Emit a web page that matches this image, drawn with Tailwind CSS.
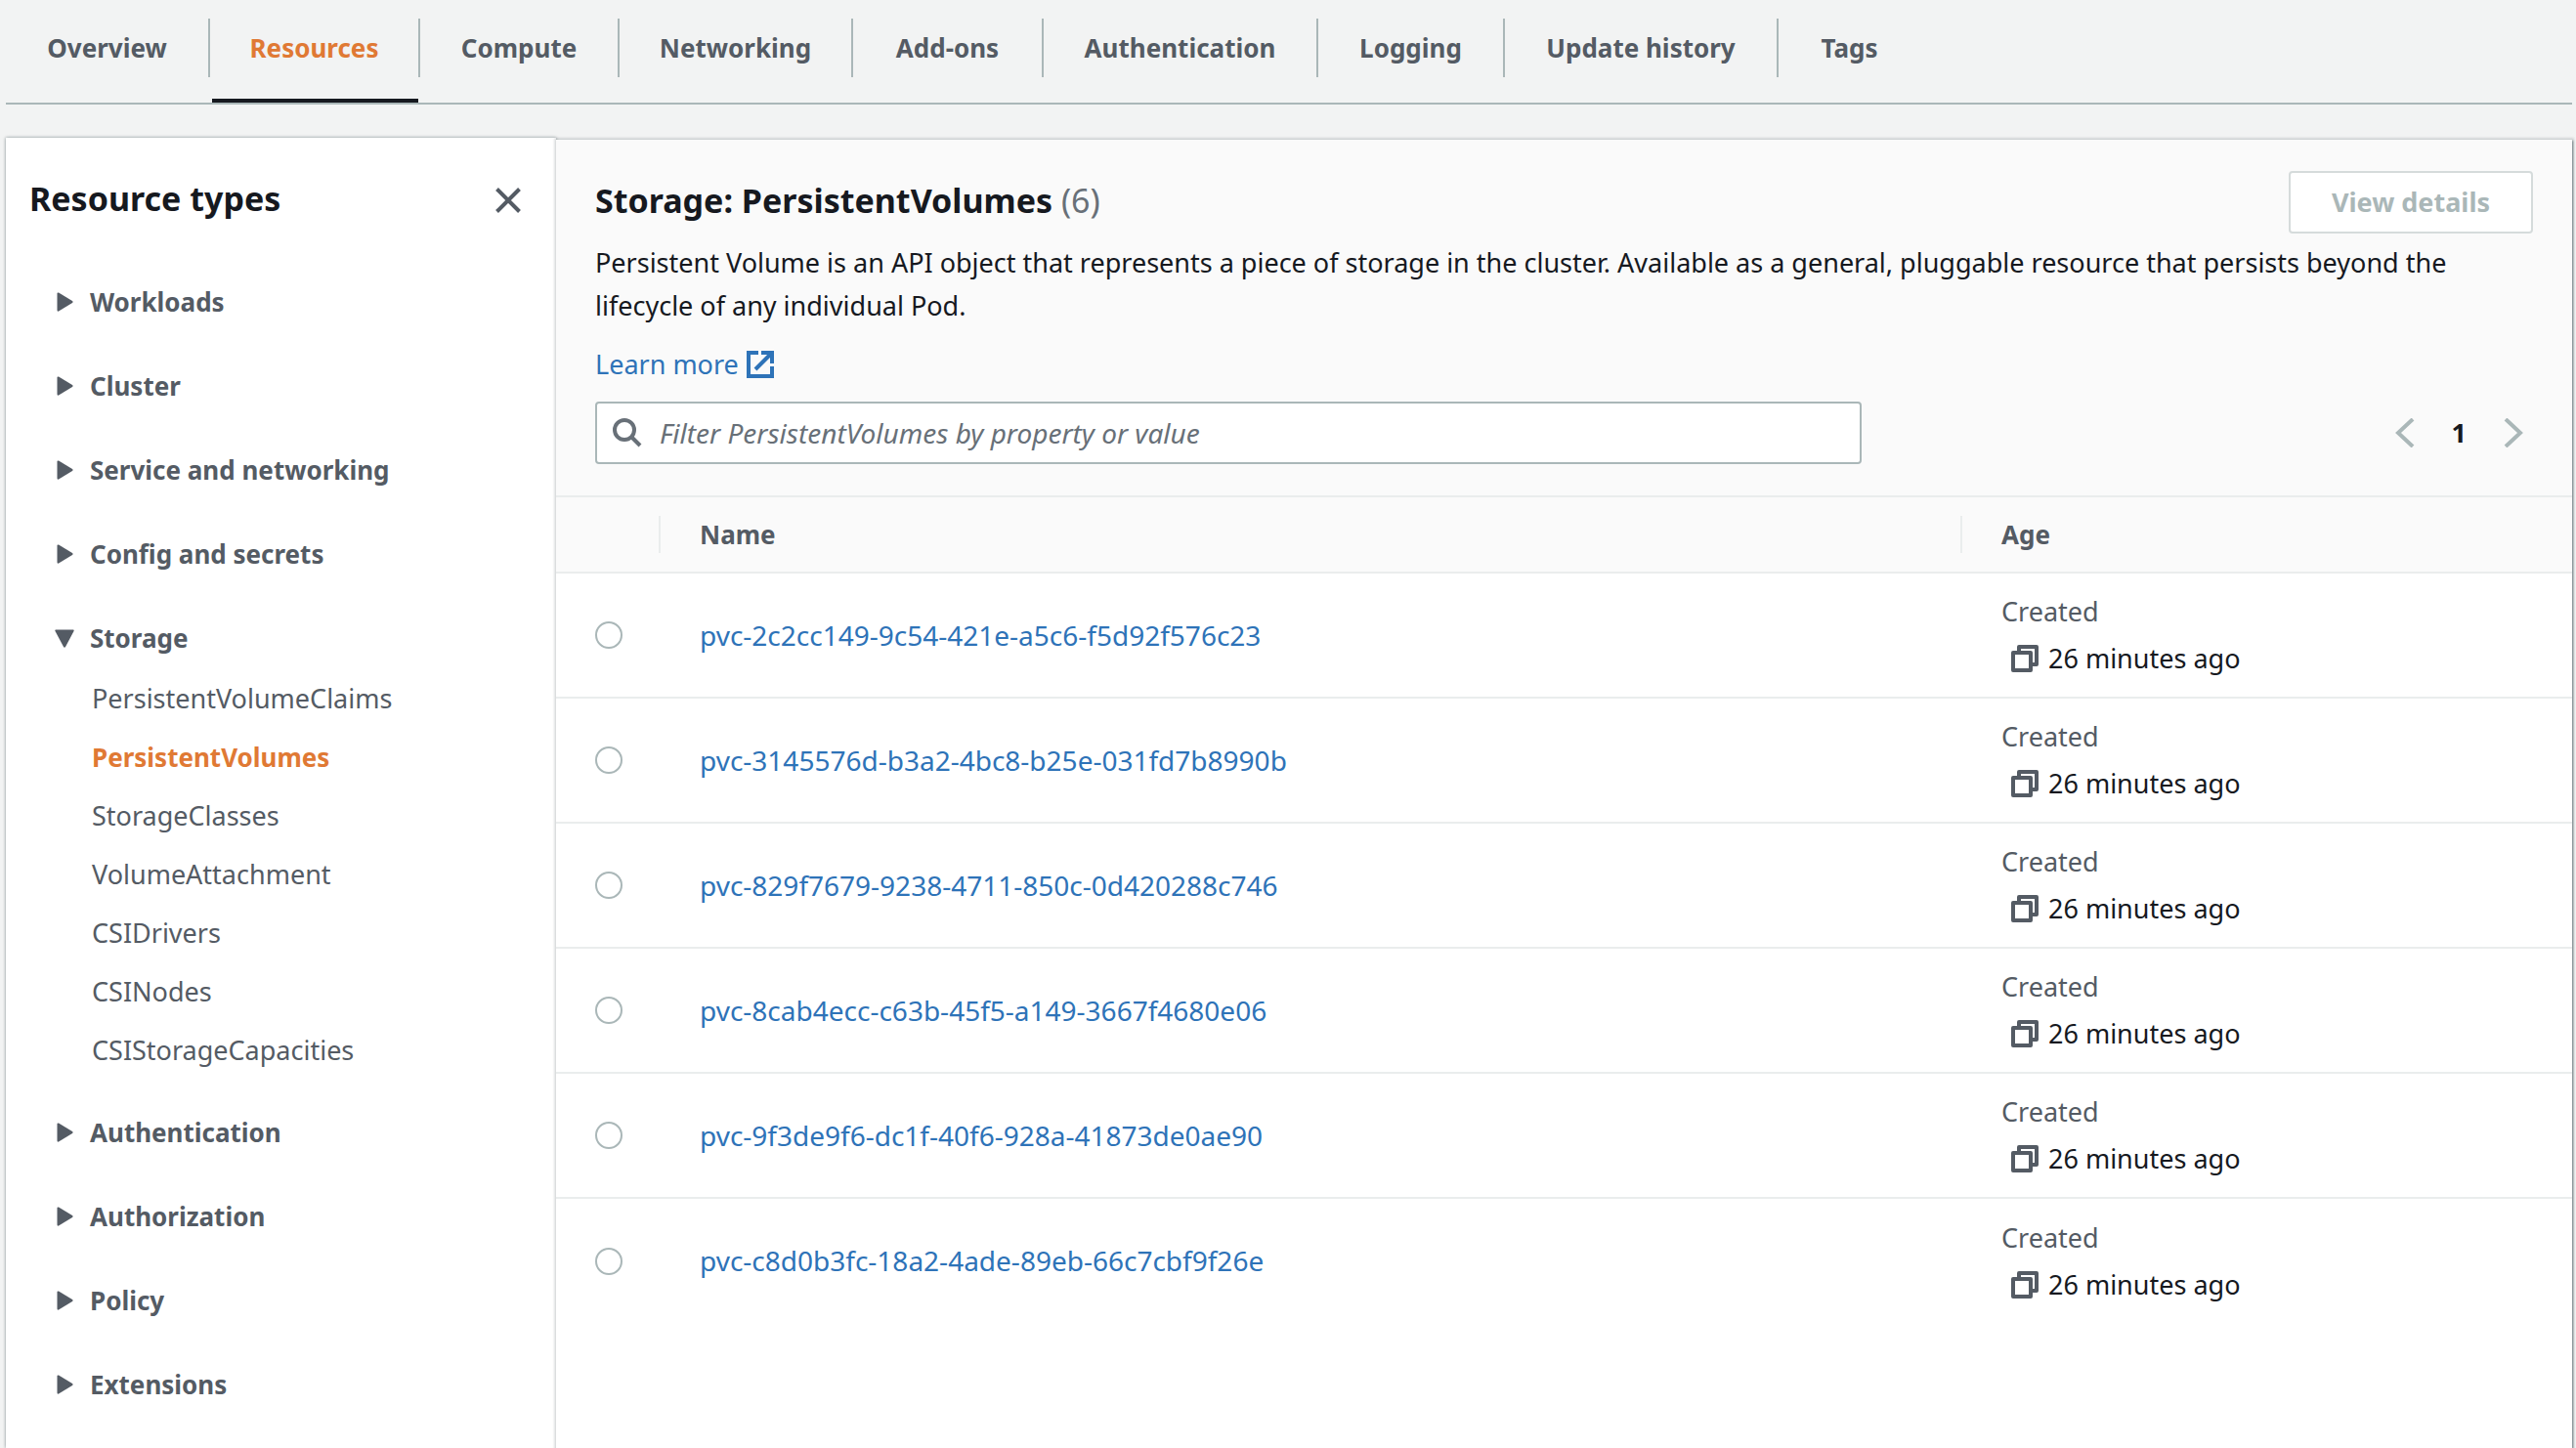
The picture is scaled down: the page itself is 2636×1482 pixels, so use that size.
<!DOCTYPE html>
<html lang="en">
<head>
<meta charset="utf-8">
<title>Cluster resources</title>
<script src="https://cdn.jsdelivr.net/npm/@tailwindcss/browser@4"></script>
</head>
<body class="min-h-screen flex flex-col bg-[#f2f3f3] pl-[6px] pr-[4px] font-['Noto_Sans',sans-serif] text-[27px] leading-[44px] text-[#16191f]">
<svg class="hidden">
  <symbol id="i-copy" viewBox="0 0 28 28"><path d="M2 8h18v18H2z M8 8V2h18v18h-6" fill="none" stroke="currentColor" stroke-width="4" stroke-linejoin="round"/></symbol>
  <symbol id="i-right" viewBox="0 0 20 20"><path d="M4 0.500l14 8.500q1.500 1 0 2L4 19.500q-1.500 .5-1.500-1v-17q0-1.500 1.500-1z" fill="currentColor"/></symbol>
  <symbol id="i-down" viewBox="0 0 20 20"><path d="M1 1.500h18q1 0 .5 1.500L11 19q-1 1.500-2 0L.5 3Q0 1.500 1 1.500z" fill="currentColor"/></symbol>
</svg>

<nav class="flex h-[107px] items-start border-b-2 border-[#aab7b8] text-[26px] font-bold text-[#545b64]" aria-label="Cluster sections" id="tabs"></nav>

<div class="mt-[34px] flex flex-1 items-stretch">
  <aside class="w-[563px] shrink-0 bg-white shadow-[0_0_3px_rgba(0,28,36,0.5)]">
    <div class="flex items-start justify-between pt-[40px] pr-[36px] pl-[24px]">
      <h2 class="text-[34px] font-bold">Resource types</h2>
      <button type="button" aria-label="Close" class="flex h-[48px] items-center text-[#545b64]">
        <svg class="size-[26px]" viewBox="0 0 26 26"><path d="M1.500 1.500l23 23M24.500 1.500l-23 23" stroke="currentColor" stroke-width="4" fill="none"/></svg>
      </button>
    </div>
    <ul class="mt-[58px] pl-[50px] text-[#545b64]" id="types"></ul>
  </aside>

  <main class="mt-[2px] min-w-0 flex-1 bg-white shadow-[0_0_2px_2px_rgba(0,28,36,0.12),1px_1px_2px_rgba(0,28,36,0.5)]">
    <header class="bg-[#fafafa] px-[40px] pt-[32px] pb-[32px]">
      <div class="flex items-start justify-between">
        <h1 class="pt-[8px] text-[34px] font-bold">Storage: PersistentVolumes <span class="font-normal text-[#687078]">(6)</span></h1>
        <button type="button" disabled class="h-[64px] w-[250px] rounded-[4px] border-2 border-[#d5dbdb] bg-white font-bold text-[#aab7b8]">View details</button>
      </div>
      <p class="mt-[8px] max-w-[1920px]">Persistent Volume is an API object that represents a piece of storage in the cluster. Available as a general, pluggable resource that persists beyond the lifecycle of any individual Pod.</p>
      <a href="#" class="mt-[16px] flex w-fit items-center gap-[8px] text-[#2e73b8]">Learn more
        <svg class="size-[28px]" viewBox="0 0 28 28" fill="none" stroke="currentColor" stroke-width="4"><path d="M12 2H2v24h24V16"/><path d="M15 2h11v11M26 2L9 19"/></svg>
      </a>
      <div class="mt-[16px] flex items-center justify-between">
        <label class="flex h-[64px] w-[1296px] items-center gap-[18px] rounded-[4px] border-2 border-[#aab7b8] bg-white pl-[16px] text-[#687078]">
          <svg class="size-[30px]" viewBox="0 0 30 30" fill="none" stroke="currentColor" stroke-width="4"><circle cx="12" cy="12" r="10"/><path d="M19 19l9 9"/></svg>
          <input type="text" aria-label="Filter PersistentVolumes" placeholder="Filter PersistentVolumes by property or value" class="h-full min-w-0 flex-1 bg-transparent text-[28px] outline-none placeholder:italic placeholder:text-[#687078]">
        </label>
        <div class="flex items-center gap-[38px] pr-[10px] text-[#aab7b8]">
          <button type="button" aria-label="Previous page"><svg class="h-[30px] w-[20px]" viewBox="0 0 20 30"><path d="M18 1L3 15l15 14" fill="none" stroke="currentColor" stroke-width="4"/></svg></button>
          <span class="font-bold text-[#16191f]">1</span>
          <button type="button" aria-label="Next page"><svg class="h-[30px] w-[20px]" viewBox="0 0 20 30"><path d="M2 1l15 14L2 29" fill="none" stroke="currentColor" stroke-width="4"/></svg></button>
        </div>
      </div>
    </header>
    <table class="w-full table-fixed text-left">
      <thead>
        <tr class="h-[78px] border-y-2 border-[#eaeded] bg-[#fafafa] text-[26px] text-[#545b64]">
          <th class="w-[107px]"><div class="h-[38px] border-r-2 border-[#eaeded]"></div></th>
          <th><div class="h-[38px] border-r-2 border-[#eaeded] pl-[40px] leading-[38px]">Name</div></th>
          <th class="w-[624px]"><div class="pl-[40px] leading-[38px]">Age</div></th>
        </tr>
      </thead>
      <tbody id="volumes"></tbody>
    </table>
  </main>
</div>

<script>
const tabs = [['Overview', 209], ['Resources', 215], ['Compute', 204], ['Networking', 239], ['Add-ons', 195], ['Authentication', 281], ['Logging', 191], ['Update history', 280], ['Tags', 145]];
document.getElementById('tabs').innerHTML = tabs.map(([name, width], i) => {
  const active = name === 'Resources';
  const rule = i < tabs.length - 1 ? 'border-r-2 border-[#aab7b8]' : '';
  return `<a href="#" style="width:${width}px" class="flex h-[105px] flex-col justify-between pt-[19px] text-center ${active ? 'text-[#e07934]' : ''}">
    <span class="block h-[60px] leading-[60px] ${rule}">${name}</span>
    ${active ? '<span class="mx-[2px] block h-[4px] bg-[#16191f]"></span>' : ''}</a>`;
}).join('');

const types = ['Workloads', 'Cluster', 'Service and networking', 'Config and secrets', 'Storage', 'Authentication', 'Authorization', 'Policy', 'Extensions'];
const storage = ['PersistentVolumeClaims', 'PersistentVolumes', 'StorageClasses', 'VolumeAttachment', 'CSIDrivers', 'CSINodes', 'CSIStorageCapacities'];
document.getElementById('types').innerHTML = types.map(name => {
  const open = name === 'Storage';
  return `<li class="${open ? 'mb-[32px]' : 'mb-[42px]'}">
    <button type="button" aria-expanded="${open}" class="flex items-center gap-[16px] text-[26px] font-bold"><svg class="size-[20px]"><use href="${open ? '#i-down' : '#i-right'}"/></svg>${name}</button>
    ${open ? `<ul class="mt-[10px] pl-[38px] leading-[60px]">${storage.map(s => `<li><a href="#" class="${s === 'PersistentVolumes' ? 'text-[26px] font-bold text-[#e07934]' : ''}">${s}</a></li>`).join('')}</ul>` : ''}</li>`;
}).join('');

const volumes = ['pvc-2c2cc149-9c54-421e-a5c6-f5d92f576c23', 'pvc-3145576d-b3a2-4bc8-b25e-031fd7b8990b', 'pvc-829f7679-9238-4711-850c-0d420288c746', 'pvc-8cab4ecc-c63b-45f5-a149-3667f4680e06', 'pvc-9f3de9f6-dc1f-40f6-928a-41873de0ae90', 'pvc-c8d0b3fc-18a2-4ade-89eb-66c7cbf9f26e'];
document.getElementById('volumes').innerHTML = volumes.map(v => `<tr class="h-[128px] border-b-2 border-[#eaeded] last:border-b-0">
  <td class="pl-[40px]"><input type="radio" name="volume" aria-label="${v}" class="block size-[28px] appearance-none rounded-full border-2 border-[#aab7b8] bg-white"></td>
  <td class="pl-[40px]"><a href="#" class="text-[28px] text-[#2e73b8]">${v}</a></td>
  <td class="pl-[40px] leading-[48px]"><div class="text-[#545b64]">Created</div>
    <div class="flex items-center gap-[10px] pl-[10px]"><button type="button" aria-label="Copy" class="text-[#545b64]"><svg class="size-[28px]"><use href="#i-copy"/></svg></button>26 minutes ago</div></td>
</tr>`).join('');
</script>
</body>
</html>
